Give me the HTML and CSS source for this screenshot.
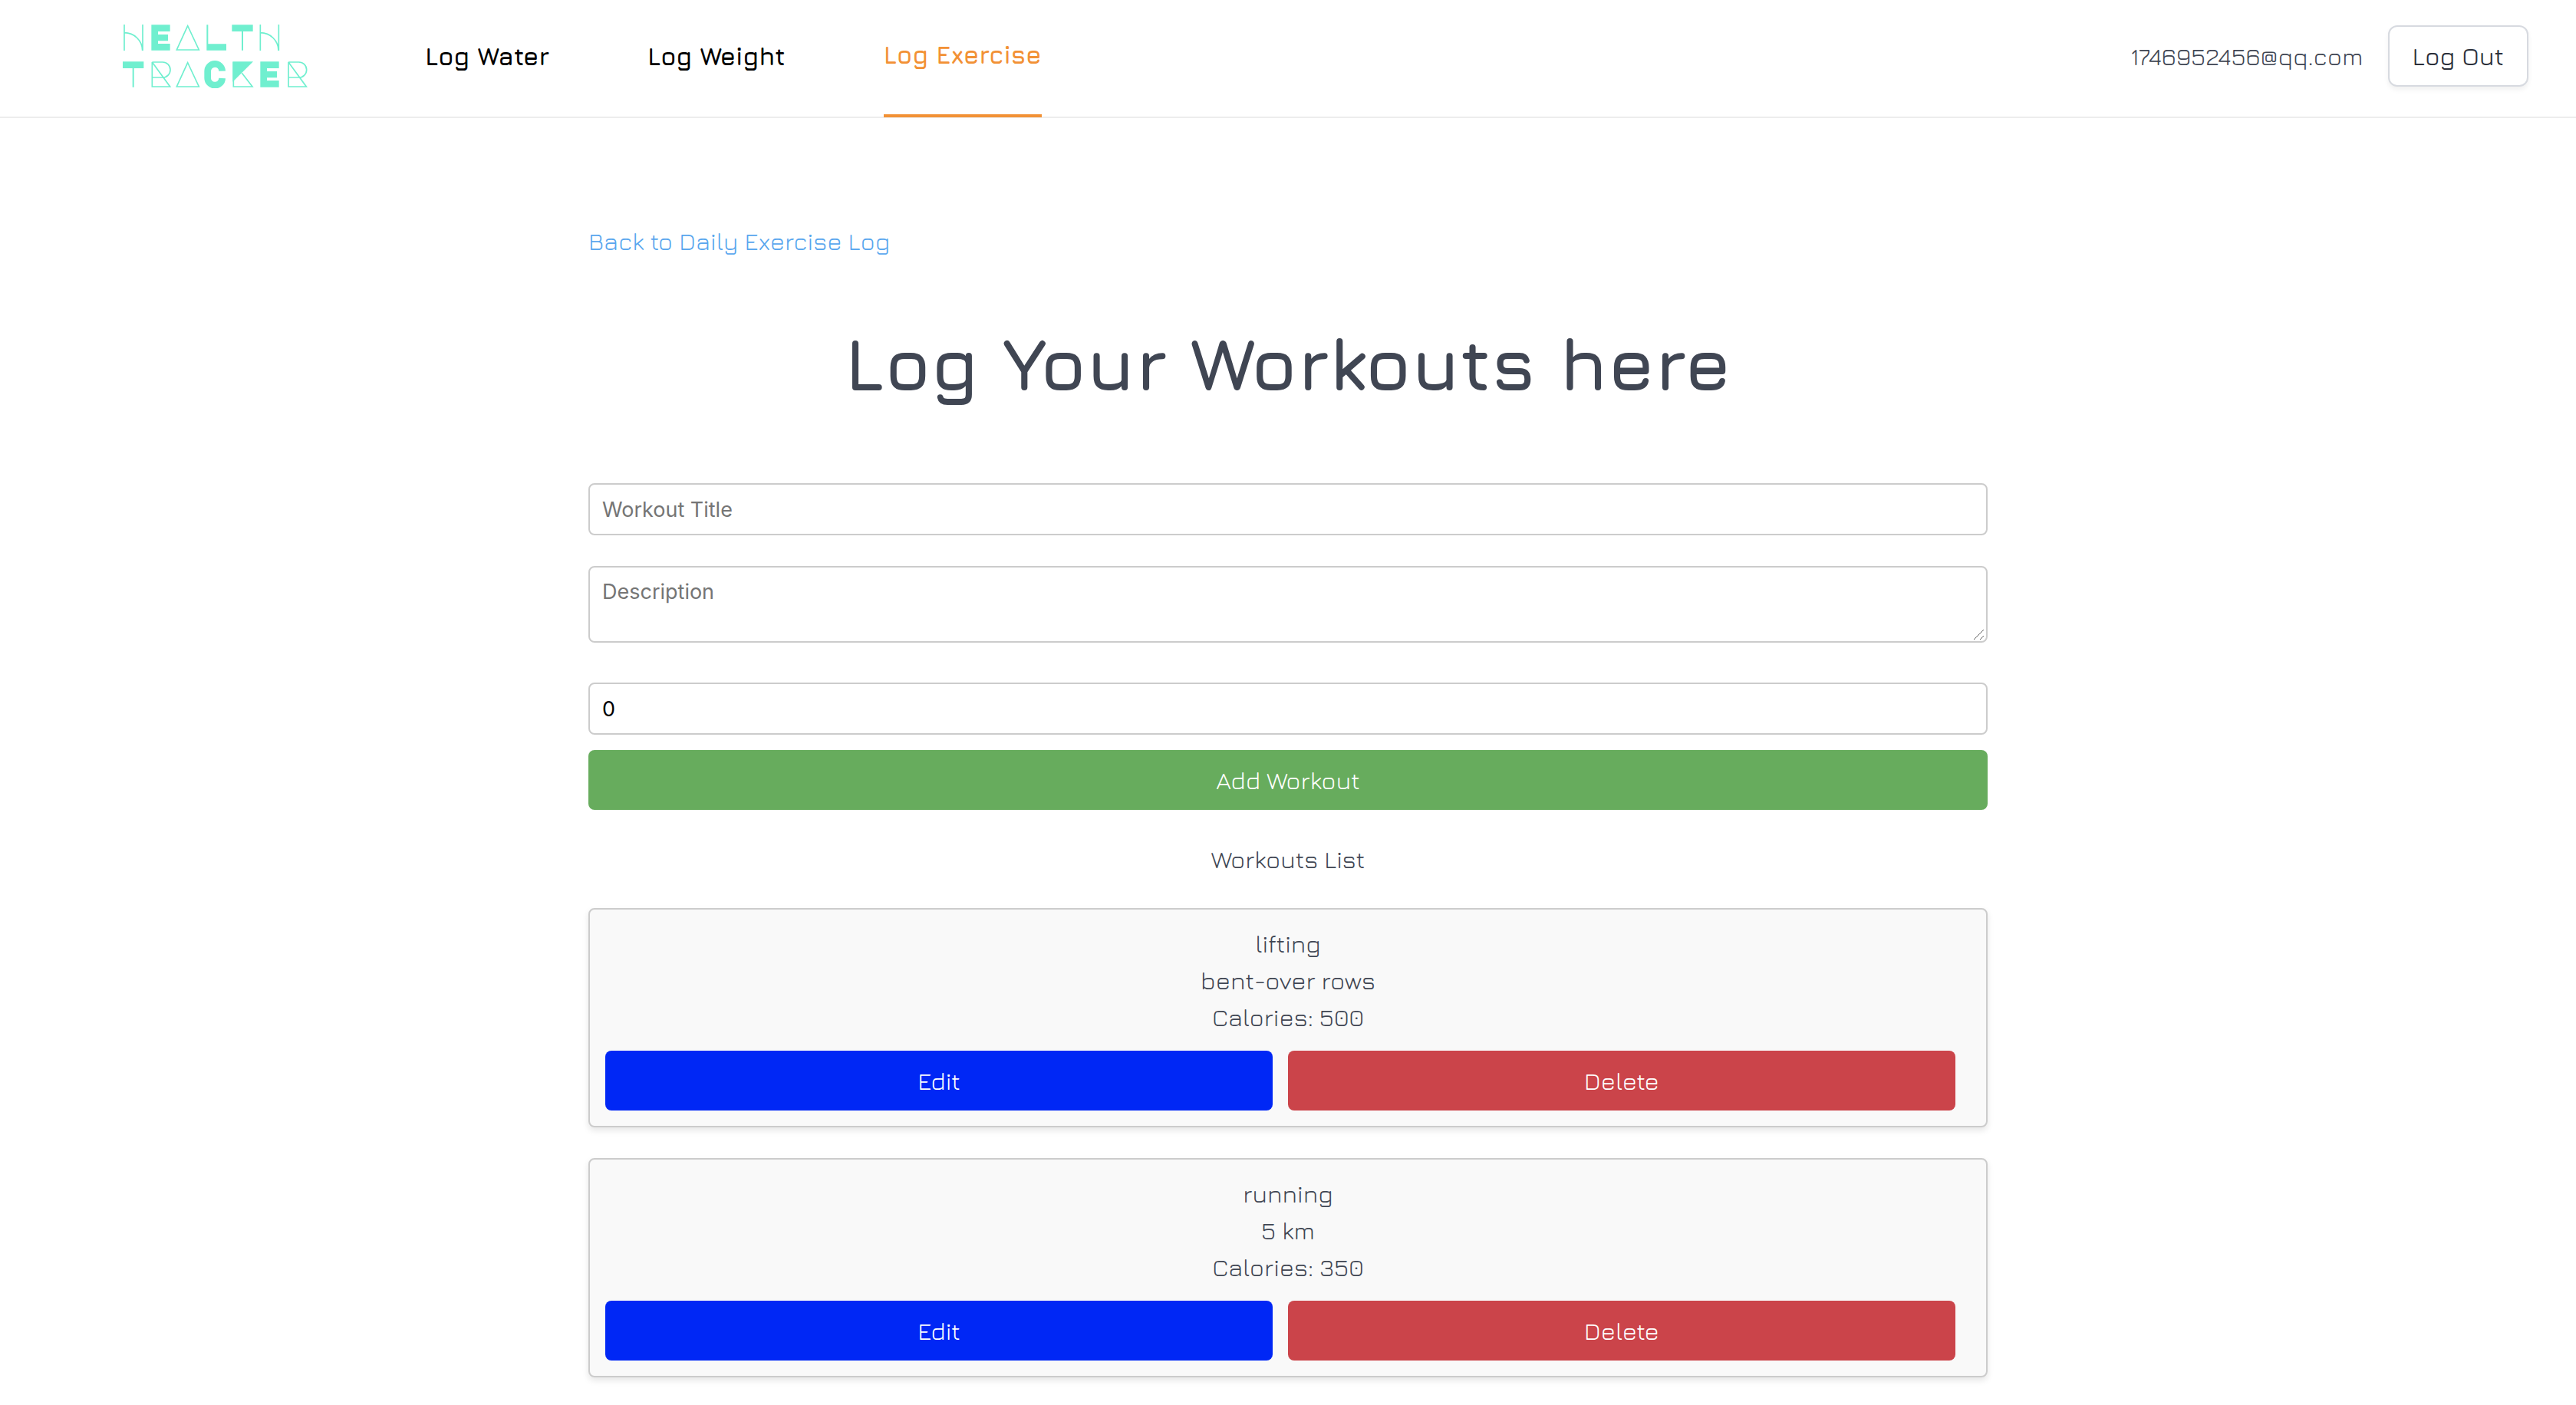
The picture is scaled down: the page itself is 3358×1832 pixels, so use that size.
FILE: index.html
```html
<!DOCTYPE html>
<html lang="en">
<head>
<meta charset="utf-8">
<meta name="viewport" content="width=device-width, initial-scale=1">
<title>Health Tracker – Log Exercise</title>
<link rel="stylesheet" href="styles.css">
</head>
<body>
<header class="site-header">
  <a class="logo" href="#" aria-label="Health Tracker">
    <svg class="logo-art" viewBox="90 66 723 249" aria-hidden="true">
      <defs>
        <path id="glyph-n" d="M96 66V168M168 66V168M96 98A71 70 0 0 1 167 168"/>
        <path id="glyph-a" d="M344 71L301 165H388Z"/>
        <path id="glyph-e" d="M202 67H275V93H228V105H267V130H228V141H275V167H202Z"/>
        <path id="glyph-t" d="M517 67H599V93H561V167H555V93H517Z"/>
        <path id="glyph-r" d="M205 213H246A30 30 0 0 1 246 273H205M205 213V309H275L205 213"/>
      </defs>
      <g class="logo-line">
        <use href="#glyph-n"/>
        <use href="#glyph-a"/>
        <use href="#glyph-n" x="532"/>
        <use href="#glyph-r"/>
        <use href="#glyph-a" y="144"/>
        <use href="#glyph-r" x="533"/>
        <path d="M523 213V309H597L556 256"/>
      </g>
      <g class="logo-solid">
        <use href="#glyph-e"/>
        <path d="M418 67H424V142H495V167H418Z"/>
        <use href="#glyph-t"/>
        <use href="#glyph-t" x="-427" y="144"/>
        <path d="M520 211H600L520 290Z"/>
        <use href="#glyph-e" x="426" y="144"/>
      </g>
      <path class="logo-bold" d="M479 248A28 28 0 0 0 422 249V274A28 28 0 0 0 479 276"/>
    </svg>
  </a>
  <nav class="main-nav">
    <a class="nav-link" href="#">Log Water</a>
    <a class="nav-link" href="#">Log Weight</a>
    <a class="nav-link nav-link-active" href="#" aria-current="page">Log Exercise</a>
  </nav>
  <div class="account">
    <span>1746952456@qq.com</span>
    <button class="logout" type="button">Log Out</button>
  </div>
</header>
<main class="page">
  <a class="back-link" href="#">Back to Daily Exercise Log</a>
  <h1 class="title">Log Your Workouts here</h1>
  <form class="workout-form">
    <input class="field" type="text" placeholder="Workout Title" aria-label="Workout Title">
    <div class="area-wrap">
      <textarea class="field field-area" placeholder="Description" aria-label="Description"></textarea>
      <svg class="grip" viewBox="0 0 15 15" aria-hidden="true"><path d="M1 14L14 1M9 14L14 9"/></svg>
    </div>
    <input class="field" type="text" inputmode="numeric" value="0" aria-label="Calories">
    <button class="btn btn-add" type="button">Add Workout</button>
  </form>
  <h2 class="list-title">Workouts List</h2>
  <ul class="workouts">
    <li class="card">
      <p>lifting</p>
      <p>bent-over rows</p>
      <p>Calories: 500</p>
      <div class="actions">
        <button class="btn btn-edit" type="button">Edit</button>
        <button class="btn btn-delete" type="button">Delete</button>
      </div>
    </li>
    <li class="card">
      <p>running</p>
      <p>5 km</p>
      <p>Calories: 350</p>
      <div class="actions">
        <button class="btn btn-edit" type="button">Edit</button>
        <button class="btn btn-delete" type="button">Delete</button>
      </div>
    </li>
  </ul>
</main>
</body>
</html>
```
FILE: styles.css
```css
*,
*::before,
*::after {
  box-sizing: border-box;
}

body {
  margin: 0;
  background: #fff;
  color: #404653;
  font-family: Jura, Inter, "Liberation Sans", sans-serif;
  font-size: 32px;
  font-weight: 400;
  line-height: 48px;
}

h1, h2, p, ul {
  margin: 0;
  padding: 0;
}

a {
  text-decoration: none;
}

button {
  font: inherit;
  cursor: pointer;
}

.site-header {
  display: flex;
  align-items: center;
  height: 154px;
  padding: 0 62px 6px 160px;
  border-bottom: 2px solid #ededed;
}

.logo {
  flex: none;
  margin-right: 153px;
}

.logo-art {
  display: block;
  width: 241px;
  height: 83px;
}

.logo-line {
  fill: none;
  stroke: #70efcf;
  stroke-width: 5;
}

.logo-solid {
  fill: #70efcf;
}

.logo-bold {
  fill: none;
  stroke: #70efcf;
  stroke-width: 26;
}

.main-nav {
  display: flex;
  align-self: stretch;
  gap: 128px;
}

.nav-link {
  display: flex;
  align-items: center;
  color: #000;
  font-weight: 700;
  white-space: nowrap;
}

.nav-link-active {
  margin-bottom: -7px;
  padding-bottom: 7px;
  border-bottom: 4px solid #f29135;
  color: #f29135;
}

.account {
  display: flex;
  align-items: center;
  gap: 32px;
  margin-left: auto;
}

.logout {
  height: 80px;
  padding: 0 30px;
  border: 2px solid #d7dae0;
  border-radius: 12px;
  background: #fff;
  box-shadow: 0 4px 6px rgba(0, 0, 0, 0.06);
  color: #2b2f3a;
  font-weight: 500;
  white-space: nowrap;
}

.page {
  max-width: 1824px;
  margin: 0 auto;
  padding: 136px 0 36px;
}

.back-link {
  display: block;
  color: #58a6ee;
}

.title {
  margin: 70px 0 92px;
  font-size: 96px;
  font-weight: 700;
  line-height: 130px;
  text-align: center;
}

.workout-form {
  display: flex;
  flex-direction: column;
}

.field {
  display: block;
  width: 100%;
  height: 68px;
  padding: 16px;
  border: 2px solid #ccc;
  border-radius: 8px;
  background: #fff;
  color: #000;
  font-family: Inter, "Liberation Sans", sans-serif;
  font-size: 27px;
  font-weight: 400;
  line-height: 32px;
}

.field::placeholder {
  color: #757575;
  opacity: 1;
}

.area-wrap {
  position: relative;
  margin: 40px 0 52px;
}

.field-area {
  height: 100px;
  resize: vertical;
}

.field-area::-webkit-resizer {
  display: none;
}

.grip {
  position: absolute;
  right: 4px;
  bottom: 3px;
  width: 15px;
  height: 15px;
  fill: none;
  stroke: #666;
  stroke-width: 1;
  pointer-events: none;
}

.btn {
  height: 78px;
  padding: 0 20px;
  border: 0;
  border-radius: 8px;
  color: #fff;
}

.btn-add {
  margin-top: 20px;
  background: #67ac5d;
}

.list-title {
  margin: 40px 0;
  font-size: 32px;
  font-weight: 400;
  text-align: center;
}

.workouts {
  display: grid;
  gap: 40px;
  list-style: none;
}

.card {
  padding: 20px;
  border: 2px solid #ccc;
  border-radius: 8px;
  background: #f9f9f9;
  box-shadow: 0 4px 8px rgba(0, 0, 0, 0.1);
  text-align: center;
}

.actions {
  display: flex;
  gap: 20px;
  margin: 20px 20px 0 0;
}

.actions .btn {
  flex: 1;
}

.btn-edit {
  background: #0027f5;
}

.btn-delete {
  background: #cb444a;
}
```
